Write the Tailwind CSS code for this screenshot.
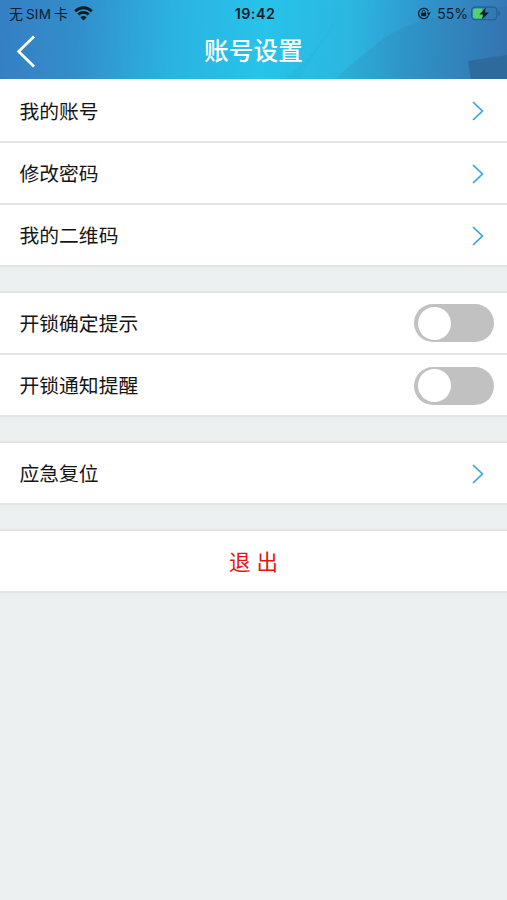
<!DOCTYPE html>
<html lang="zh-CN">
<head>
<meta charset="utf-8">
<title>账号设置</title>
<script src="https://cdn.jsdelivr.net/npm/@tailwindcss/browser@4"></script>
</head>
<body class="flex h-[900px] w-[507px] flex-col overflow-hidden bg-[#ecf0f0] font-['Liberation_Sans','Noto_Sans_CJK_SC',sans-serif] text-[19.8px] text-[#151515]">
<header class="relative h-[79px] shrink-0">
  <svg class="absolute inset-0" width="507" height="79" viewBox="0 0 507 79">
    <defs>
      <linearGradient id="sky" gradientUnits="userSpaceOnUse" x1="0" y1="30" x2="507" y2="60"><stop offset="0" stop-color="#357fc4"/><stop offset=".15" stop-color="#328ecb"/><stop offset=".34" stop-color="#2bb3e0"/><stop offset=".52" stop-color="#27c3ea"/><stop offset=".69" stop-color="#2bb6e0"/><stop offset=".84" stop-color="#3093cc"/><stop offset="1" stop-color="#3578b5"/></linearGradient>
      <linearGradient id="hill" x1="0" x2="1"><stop offset="0" stop-color="#2caed6"/><stop offset=".4" stop-color="#2e94c5"/><stop offset="1" stop-color="#3373b0"/></linearGradient>
    </defs>
    <path fill="url(#sky)" d="M0 0h507v79H0z"/>
    <path fill="#259fcf" fill-opacity=".16" d="M285 79 Q315 55 334 23 Q331 33 320 45 L300 79z"/>
    <path fill="url(#hill)" fill-opacity=".8" d="M334 79 L380 41 Q402 24 445 15 L507 6V79z"/>
    <path fill="#2e6a9e" d="M468 61 L507 55V79H471z"/>
  </svg>
  <div class="relative grid h-7 grid-cols-3 items-center pl-[9px] pr-[6px] text-[13px] leading-7 text-[#071d2b]">
    <div class="flex items-center font-[Inter,'Noto_Sans_CJK_SC',sans-serif]">
      <span class="whitespace-nowrap"><span class="text-[14px]">无</span><span class="ml-[3px] text-[13.5px] tracking-[0.2px]">SIM</span><span class="ml-[3px] text-[14px]">卡</span></span>
      <svg class="ml-[6px] -translate-y-px" width="19" height="15" viewBox="0 0 19 15" fill="none" stroke="#071d2b" stroke-width="2.8"><path d="M1.2 5.2C6 .6 13 .6 17.8 5.2M4.3 8.5c3-2.8 7.4-2.8 10.4 0"/><path fill="#071d2b" stroke="none" d="M9.5 14.4l-3.2-3.2q3.2-2.6 6.4 0z"/></svg>
    </div>
    <span class="text-center font-[Inter,sans-serif] text-[14.3px] font-semibold tracking-[0.5px]">19:42</span>
    <div class="flex items-center justify-end font-[Inter,sans-serif]">
      <svg class="mr-[6px] -translate-y-px" width="14" height="13" viewBox="0 0 14 13" fill="none" stroke="#071d2b"><path stroke-width="1.3" d="M11.4 4.2A5.2 5.2 0 1 0 11.4 8.8"/><path fill="#071d2b" stroke="none" d="M9.7 5.6h4l-2 3.3z"/><path fill="#071d2b" stroke="none" d="M4.2 5.8h5v3.4h-5z"/><path d="M5.2 6V4.8a1.5 1.5 0 0 1 3 0V6"/></svg>
      <span class="text-[14px]">55%</span>
      <svg class="ml-[3px] -translate-y-px" width="30" height="15" viewBox="0 0 30 15"><rect x=".6" y="1.1" width="25.4" height="12.6" rx="3.6" fill="none" stroke="#285d89" stroke-width="1.1"/><path d="M27.5 5v5q1.7-.7 1.7-2.5T27.5 5" fill="#285d89"/><path d="M4 2.6h7.5v9.8H4Q2 12.4 2 10.4V4.6Q2 2.6 4 2.6" fill="#4fd468"/><path d="M14.9 1.8 8.4 8.4h4l-1.5 5 7-7h-4.2z" fill="#071d2b"/></svg>
    </div>
  </div>
  <div class="relative grid h-[48px] grid-cols-[1fr_auto_1fr] items-center">
    <svg class="mb-[2px] ml-4" width="20" height="34" viewBox="0 0 20 34" fill="none" stroke="#fff" stroke-width="2.7"><path d="M18 2.5 2.6 17.5 18 32.5"/></svg>
    <h1 class="text-[24.7px] font-medium leading-[48px] text-white">账号设置</h1>
  </div>
</header>
<main>
  <section class="mb-6">
    <div class="flex h-16 items-center justify-between border-b-2 border-[#e3e5e5] bg-white pl-[19.5px] pr-[23px] pt-[2px]"><span class="pt-[3px]">我的账号</span><svg width="12" height="20" viewBox="0 0 12 20" fill="none" stroke="#35a4dc" stroke-width="1.7"><path d="M1 1l9.4 9L1 19"/></svg></div>
    <div class="flex h-[62px] items-center justify-between border-b-2 border-[#e3e5e5] bg-white pl-[19.5px] pr-[23px] pt-px"><span class="pt-[3px]">修改密码</span><svg width="12" height="20" viewBox="0 0 12 20" fill="none" stroke="#35a4dc" stroke-width="1.7"><path d="M1 1l9.4 9L1 19"/></svg></div>
    <div class="flex h-[62px] items-center justify-between border-b-2 border-[#e3e5e5] bg-white pl-[19.5px] pr-[23px] pt-px"><span class="pt-[3px]">我的二维码</span><svg width="12" height="20" viewBox="0 0 12 20" fill="none" stroke="#35a4dc" stroke-width="1.7"><path d="M1 1l9.4 9L1 19"/></svg></div>
  </section>
  <section class="mb-6 border-t-2 border-[#e3e5e5]">
    <div class="flex h-[62px] items-center justify-between border-b-2 border-[#e3e5e5] bg-white pl-[19.5px] pr-[13px]"><span class="pt-[4px]">开锁确定提示</span><span class="flex h-[38px] w-[80px] items-center rounded-full bg-[#c1c1c1] pl-1"><span class="size-[33px] rounded-full bg-white"></span></span></div>
    <div class="flex h-[62px] items-center justify-between border-b-2 border-[#e3e5e5] bg-white pl-[19.5px] pr-[13px] pt-px"><span class="pt-[3px]">开锁通知提醒</span><span class="flex h-[38px] w-[80px] items-center rounded-full bg-[#c1c1c1] pl-1"><span class="size-[33px] rounded-full bg-white"></span></span></div>
  </section>
  <section class="mb-6 border-t-2 border-[#e3e5e5]">
    <div class="flex h-[62px] items-center justify-between border-b-2 border-[#e3e5e5] bg-white pl-[19.5px] pr-[23px] pt-px"><span class="pt-[3px]">应急复位</span><svg width="12" height="20" viewBox="0 0 12 20" fill="none" stroke="#35a4dc" stroke-width="1.7"><path d="M1 1l9.4 9L1 19"/></svg></div>
  </section>
  <button class="flex h-16 w-full items-center justify-center border-y-2 border-[#e3e5e5] bg-white pt-[5px] text-[21.5px] text-[#e81414]">退&nbsp;出</button>
</main>
</body>
</html>
